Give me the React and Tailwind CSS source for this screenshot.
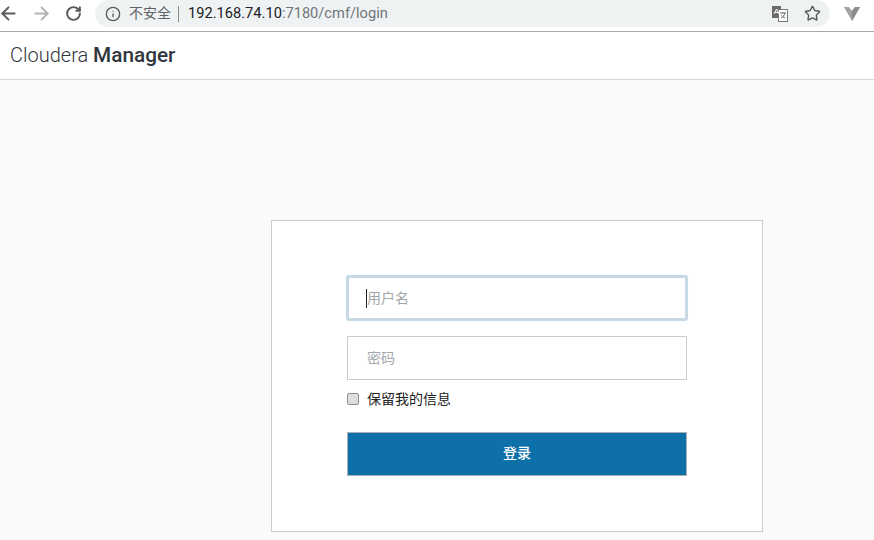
import { ArrowLeft, ArrowRight, RotateCw, Info, Star } from "lucide-react";

const cjk = "font-['Liberation_Sans','Noto_Sans_CJK_SC',sans-serif]";

const App = () => {
  return (
    <div className={`h-[540px] w-[874px] overflow-hidden bg-[#f9fafc] ${cjk}`}>
      {/* Browser toolbar */}
      <div className="flex h-8 items-center border-b border-[#a9a9a9] bg-white pb-1">
        <ArrowLeft size={21} strokeWidth={2.2} className="-ml-[2px] shrink-0 text-[#5a5a5a]" />
        <ArrowRight size={21} strokeWidth={2.2} className="ml-3 shrink-0 text-[#b4b4b4]" />
        <RotateCw size={17} strokeWidth={2.8} className="ml-[13px] shrink-0 text-[#5a5a5a]" />
        <div className="ml-[13px] flex h-[27px] w-[735px] shrink-0 items-center rounded-full bg-[#eff2f3] pl-[10px]">
          <Info size={16} strokeWidth={2} className="text-[#5a5a5a]" />
          <span className="ml-2 text-[14px] text-[#5f6368]">不安全</span>
          <span className="ml-[7px] h-4 w-px bg-[#8a8a8a]" />
          <span className="ml-[9px] font-['Roboto',sans-serif] text-[14.65px] text-[#202124]">
            192.168.74.10<span className="text-[#70757a]">:7180/cmf/login</span>
          </span>
          <svg viewBox="0 0 16 16" className="ml-auto h-4 w-4">
            <rect x="0" y="0" width="9" height="12" fill="#6b6b6b" />
            <rect x="6.500" y="3.500" width="9" height="12" fill="#fff" stroke="#777" />
            <path d="M8 7h6M11 6v1M13 7c-.5 2-2 4-4 5M9.500 9c.7 1.200 1.700 2.200 3.500 3" stroke="#666" fill="none" strokeWidth="1" />
            <path d="M2 8l2.500-5L7 8M3 6.500h3" stroke="#fff" fill="none" strokeWidth="1" />
          </svg>
          <Star size={17} strokeWidth={2} className="ml-4 mr-[9px] text-[#5a5a5a]" />
        </div>
        <svg viewBox="0 0 16 14" className="ml-[14px] h-[14px] w-4 shrink-0">
          <path d="M0 0h5l3 4 3-4h5l-8 14z" fill="#a3a3a3" />
          <path d="M8 14l8-14h-5l-3 4z" fill="#8c8c8c" />
        </svg>
      </div>

      {/* Page header */}
      <header className="flex h-12 items-center border-b border-[#d8d8d8] bg-white pl-[10px] pt-px">
        <span className="font-['Roboto',sans-serif] text-[20px] font-light text-[#2f363d]">
          Cloudera <span className="text-[20.75px] font-medium">Manager</span>
        </span>
      </header>

      {/* Login card */}
      <main className="ml-[271px] mt-[140px] h-[312px] w-[492px] border border-[#cccccc] bg-white pl-[75px] pt-[55px]">
        <form className="w-[340px]">
          <div className="-ml-px -mt-px mb-[15px] flex h-[46px] w-[342px] items-center rounded-[3px] border-[3px] border-[#c7d9e5] pl-[17px] text-[14px] text-[#a2a7ab] shadow-[0_0_1px_#c7d9e5]">
            <span className="h-[19px] w-px bg-[#222]" />
            用户名
          </div>
          <div className="flex h-11 w-[340px] items-center border border-[#cccccc] pl-[19px] text-[14px] text-[#a2a7ab]">
            密码
          </div>
          <label className="mt-[10px] flex h-[18px] items-center text-[14px] text-[#222]">
            <span className="h-3 w-3 rounded-[2px] border border-[#8f8f8f] bg-[#dedede]" />
            <span className="ml-2">保留我的信息</span>
          </label>
          <button
            type="button"
            className="mt-[24px] h-11 w-[340px] border border-[#a8b0b6] bg-[#0e70a8] pb-[2px] text-[14px] font-medium text-white"
          >
            登录
          </button>
        </form>
      </main>
    </div>
  );
};

export default App;
